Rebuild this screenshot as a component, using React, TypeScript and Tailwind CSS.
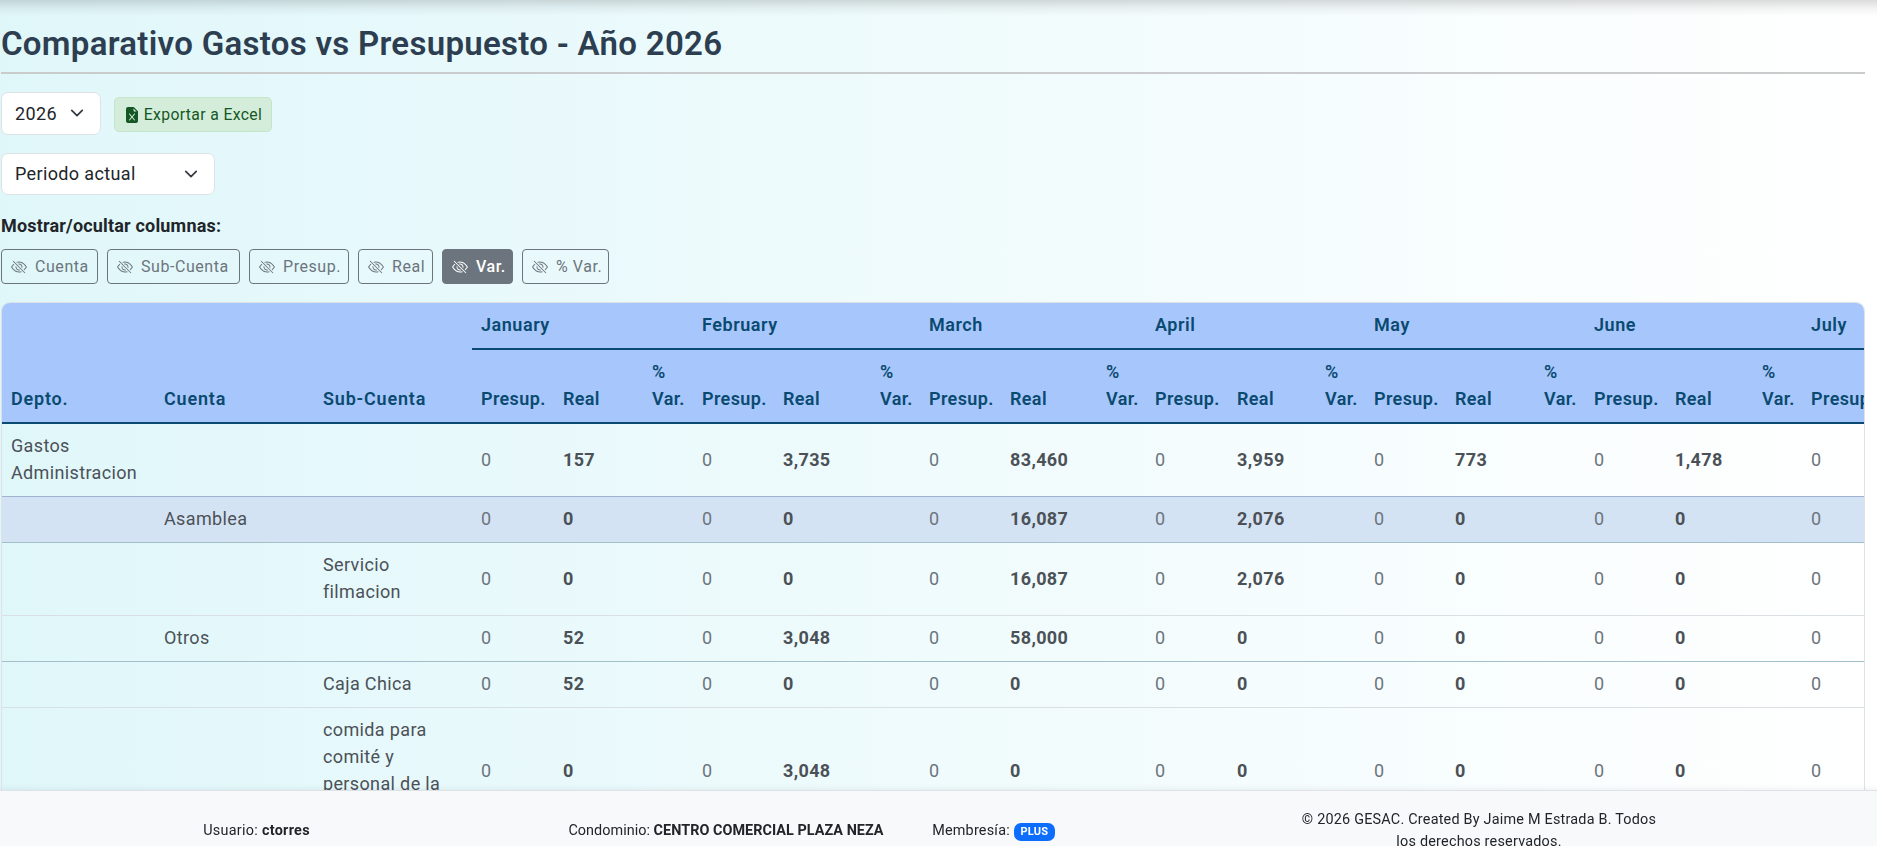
import { BsEyeSlash, BsFileEarmarkExcelFill } from "react-icons/bs";
import clsx from "clsx";

const months = ["January", "February", "March", "April", "May", "June", "July"];

const toggles = [
  { label: "Cuenta", width: "w-[97px]", active: false },
  { label: "Sub-Cuenta", width: "w-[133px]", active: false },
  { label: "Presup.", width: "w-[100px]", active: false },
  { label: "Real", width: "w-[75px]", active: false },
  { label: "Var.", width: "w-[71px]", active: true },
  { label: "% Var.", width: "w-[87px]", active: false },
];

// depto, cuenta, sub-cuenta, then presup / real / % var for every month
const colWidths = [
  153, 159, 158, 82, 89, 50, 81, 97, 49, 81, 96, 49, 82, 88, 49, 81, 89, 50,
  81, 87, 49, 81, 89, 49,
];

const rows = [
  {
    level: 0,
    name: "Gastos Administracion",
    real: ["157", "3,735", "83,460", "3,959", "773", "1,478", "0"],
  },
  {
    level: 1,
    name: "Asamblea",
    highlight: true,
    real: ["0", "0", "16,087", "2,076", "0", "0", "0"],
  },
  {
    level: 2,
    name: "Servicio filmacion",
    real: ["0", "0", "16,087", "2,076", "0", "0", "0"],
  },
  {
    level: 1,
    name: "Otros",
    real: ["52", "3,048", "58,000", "0", "0", "0", "0"],
  },
  {
    level: 2,
    name: "Caja Chica",
    real: ["52", "0", "0", "0", "0", "0", "0"],
  },
  {
    level: 2,
    name: "comida para comité y personal de la administracion",
    real: ["0", "3,048", "0", "0", "0", "0", "0"],
  },
];

function Chevron() {
  return (
    <svg viewBox="0 0 16 16" className="h-3.5 w-3.5" fill="none">
      <path
        d="m2 5 6 6 6-6"
        stroke="#343a40"
        strokeWidth="2"
        strokeLinecap="round"
        strokeLinejoin="round"
      />
    </svg>
  );
}

function Select({ value, className }: { value: string; className: string }) {
  return (
    <div
      className={clsx(
        "flex items-center justify-between rounded-[7px] border border-[#dee2e6] bg-white pb-px pl-[13px] text-[#212529]",
        className,
      )}
    >
      <span>{value}</span>
      <Chevron />
    </div>
  );
}

function ComparativoTable() {
  return (
    <div className="mt-[18px] h-[560px] overflow-hidden rounded-t-[9px] border border-[#dee2e6]">
      <table className="w-[2019px] table-fixed border-separate border-spacing-0 text-left">
        <colgroup>
          {colWidths.map((w, i) => (
            <col key={i} style={{ width: w }} />
          ))}
        </colgroup>
        <thead className="bg-[#a7c7fc] tracking-[0.02em] text-[#0b4a70]">
          <tr>
            {["Depto.", "Cuenta", "Sub-Cuenta"].map((h) => (
              <th
                key={h}
                rowSpan={2}
                className="border-b-2 border-[#0b4a70] px-[9px] pt-2 pb-2.5 align-bottom font-semibold tracking-[0.045em]"
              >
                {h}
              </th>
            ))}
            {months.map((m) => (
              <th
                key={m}
                colSpan={3}
                className="border-b-2 border-[#0b4a70] px-[9px] pt-2 pb-2.5 font-semibold tracking-[0.03em]"
              >
                {m}
              </th>
            ))}
          </tr>
          <tr>
            {months.map((m) =>
              ["Presup.", "Real", "% Var."].map((h) => (
                <th
                  key={m + h}
                  className="border-b-2 border-[#0b4a70] pt-2 pr-0 pb-2.5 pl-[9px] align-bottom font-semibold"
                >
                  {h}
                </th>
              )),
            )}
          </tr>
        </thead>
        <tbody className="text-[#4b5157]">
          {rows.map((row) => (
            <tr
              key={row.name}
              className={clsx(
                "[&>td]:border-b [&>td]:px-[9px] [&>td]:pt-2 [&>td]:pb-2.5",
                row.highlight && "bg-[#d4e3f3]",
                row.level === 0 && "[&>td]:border-[#9fb2cf]",
                row.level === 1 && "[&>td]:border-[#a3c0ca]",
                row.level === 2 && "[&>td]:border-[#d9dfe3]",
              )}
            >
              {[0, 1, 2].map((level) => (
                <td key={level}>{row.level === level ? row.name : ""}</td>
              ))}
              {row.real.map((value, i) => [
                <td key={`p${i}`} className="text-[#6c757d]">
                  0
                </td>,
                <td key={`r${i}`} className="font-bold">
                  {value}
                </td>,
                <td key={`v${i}`} />,
              ])}
            </tr>
          ))}
        </tbody>
      </table>
    </div>
  );
}

function Footer() {
  return (
    <footer className="fixed inset-x-0 bottom-0 flex h-14 border-t border-[#dee2e6] bg-[#f8f9fa] text-[14.4px] leading-[21.6px] tracking-[0.015em] text-[#212529] shadow-[0_-2px_5px_rgba(0,0,0,0.05)]">
      <div className="w-[513px] pt-[29px] text-center tracking-[0.02em]">
        Usuario: <b>ctorres</b>
      </div>
      <div className="w-[426px] pt-[29px] text-center tracking-[0.003em]">
        Condominio: <b>CENTRO COMERCIAL PLAZA NEZA</b>
      </div>
      <div className="flex w-[109px] justify-center gap-1 pt-[29px] whitespace-nowrap">
        Membresía:
        <span className="mt-[3px] h-[18px] w-[41px] shrink-0 rounded-[7px] bg-[#0d6efd] text-center text-[11px] leading-[18px] font-bold text-white">
          PLUS
        </span>
      </div>
      <div className="ml-[246px] w-[370px] pt-[18px] text-center">
        © 2026 GESAC. Created By Jaime M Estrada B. Todos
        <br />
        los derechos reservados.
      </div>
    </footer>
  );
}

export default function App() {
  return (
    <div className="relative h-[846px] overflow-hidden bg-linear-to-r from-[#e0f7fa] to-white pr-3 pl-px font-[Roboto,sans-serif] text-[18px] leading-[27px] tracking-[0.02em]">
      <div className="absolute inset-x-0 top-0 h-4 bg-linear-to-b from-black/14 via-black/5 to-transparent" />
      <h1 className="h-[74px] border-b-2 border-[#c9cbcc] pt-[24px] text-[33px] leading-[40px] font-semibold tracking-[0.009em] text-[#2c3e50]">
        Comparativo Gastos vs Presupuesto - Año 2026
      </h1>
      <div className="mt-[18px] flex items-center">
        <Select value="2026" className="h-[43px] w-[100px] pr-4" />
        <button className="mt-0.5 ml-[13px] flex h-[35px] w-[158px] items-center justify-center gap-1 rounded-[5px] border border-[#c3e6cb] bg-[#d4edda] text-[15.75px] text-[#155724]">
          <BsFileEarmarkExcelFill className="h-4 w-4" />
          Exportar a Excel
        </button>
      </div>
      <Select value="Periodo actual" className="mt-[18px] h-[42px] w-[214px] pr-4" />
      <p className="mt-[17px] font-bold tracking-[0.01em] text-[#212529]">
        Mostrar/ocultar columnas:
      </p>
      <div className="mt-[10px] flex gap-[9px]">
        {toggles.map((t) => (
          <button
            key={t.label}
            className={clsx(
              "flex h-[35px] items-center gap-2 rounded-[4px] border border-[#6c757d] pl-[9px] text-[16px] tracking-[0.035em] whitespace-nowrap",
              t.width,
              t.active
                ? "bg-[#6c757d] font-medium text-white"
                : "text-[#6c757d]",
            )}
          >
            <BsEyeSlash className="h-4 w-4" />
            {t.label}
          </button>
        ))}
      </div>
      <ComparativoTable />
      <Footer />
    </div>
  );
}
